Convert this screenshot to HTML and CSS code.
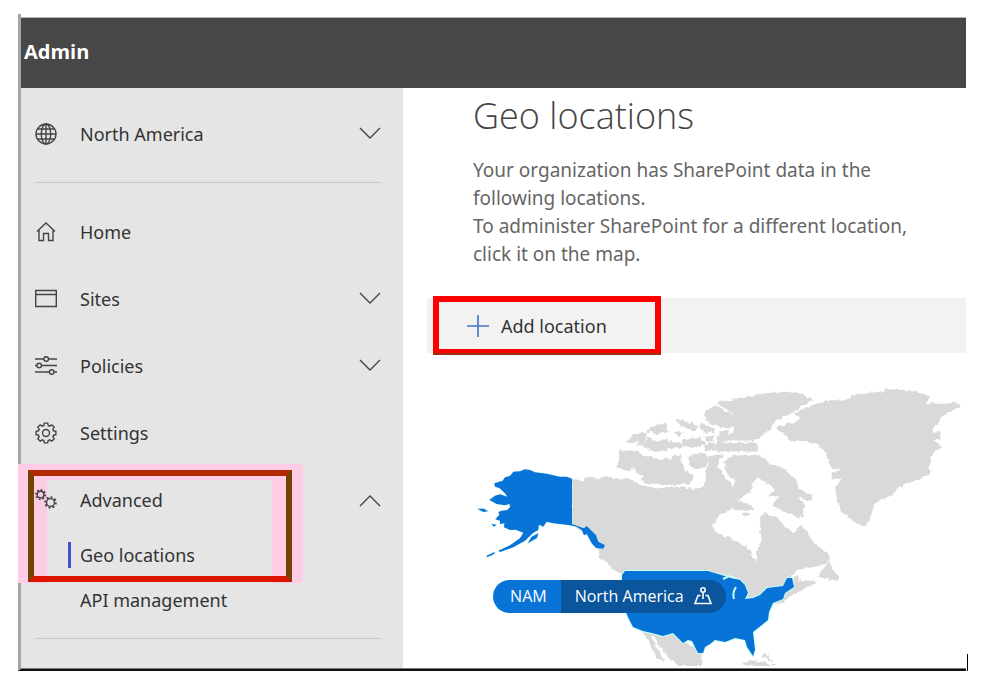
FILE: index.html
```html
<!DOCTYPE html>
<html lang="en">
<head>
<meta charset="utf-8">
<title>Geo locations - Admin</title>
<link rel="stylesheet" href="styles.css">
</head>
<body>
<div class="window">
  <header class="topbar">Admin</header>
  <div class="layout">
    <nav class="sidebar" aria-label="Admin navigation">
      <button class="row" type="button">
        <svg class="icon" viewBox="0 0 22 22"><circle cx="11" cy="11" r="10"/><ellipse cx="11" cy="11" rx="4.7" ry="10"/><path d="M11 1v20M1 11h20M2.6 6h16.800M2.600 16h16.800"/></svg>
        <span class="label">North America</span>
        <svg class="chevron" viewBox="0 0 22 22"><path d="M1 5l10 10L21 5"/></svg>
      </button>
      <hr class="rule">
      <a class="row" href="#home">
        <svg class="icon" viewBox="0 0 22 22"><path d="M2 10.500L11 2l9 8.500M4 9v10.500h4.500v-7h5v7H18V9"/></svg>
        <span class="label">Home</span>
      </a>
      <button class="row" type="button">
        <svg class="icon" viewBox="0 0 22 22"><path d="M.7 2.500h20.600v16H.7zM.7 6.500h20.600"/></svg>
        <span class="label">Sites</span>
        <svg class="chevron" viewBox="0 0 22 22"><path d="M1 5l10 10L21 5"/></svg>
      </button>
      <button class="row" type="button">
        <svg class="icon" viewBox="0 0 22 22"><path d="M0 4h9M13.500 4H22M0 10.500h2M6.500 10.500H22M0 17h14.500M19 17h3"/><circle cx="11.200" cy="4" r="2.300"/><circle cx="4.200" cy="10.500" r="2.300"/><circle cx="16.700" cy="17" r="2.300"/></svg>
        <span class="label">Policies</span>
        <svg class="chevron" viewBox="0 0 22 22"><path d="M1 5l10 10L21 5"/></svg>
      </button>
      <a class="row" href="#settings">
        <svg class="icon" viewBox="-11 -11 22 22"><circle r="3.500"/><path d="M-2.200-7.500L-1.700-9.900 1.700-9.900 2.200-7.500 3.750-6.860 5.800-8.200 8.200-5.800 6.860-3.750 7.500-2.200 9.900-1.700 9.900 1.700 7.500 2.200 6.860 3.750 8.200 5.800 5.800 8.200 3.750 6.860 2.200 7.500 1.700 9.900-1.700 9.900-2.200 7.500-3.750 6.860-5.800 8.200-8.200 5.800-6.860 3.750-7.500 2.200-9.900 1.700-9.900-1.700-7.500-2.200-6.860-3.750-8.200-5.800-5.800-8.200-3.750-6.860z"/></svg>
        <span class="label">Settings</span>
      </a>
      <div class="group">
        <button class="row" type="button" aria-expanded="true">
          <svg class="icon" viewBox="0 0 22 22"><circle cx="5.600" cy="5.600" r="3.300"/><circle class="teeth" cx="5.600" cy="5.600" r="4.600" pathLength="32"/><circle cx="15.500" cy="13.500" r="3.900"/><circle class="teeth" cx="15.500" cy="13.500" r="5.300" pathLength="32"/></svg>
          <span class="label">Advanced</span>
          <svg class="chevron" viewBox="0 0 22 22"><path d="M1 17L11 7l10 10"/></svg>
        </button>
        <a class="subrow current" href="#geo" aria-current="page">Geo locations</a>
      </div>
      <a class="subrow" href="#api">API management</a>
      <hr class="rule">
    </nav>
    <main class="content">
      <div class="intro">
        <h1>Geo locations</h1>
        <p>Your organization has SharePoint data in the<br>following locations.<br>To administer SharePoint for a different location,<br>click it on the map.</p>
      </div>
      <div class="commands">
        <button class="add" type="button">
          <svg class="plus" viewBox="0 0 22 22"><path d="M11 0v22M0 11h22"/></svg>
          <span>Add location</span>
        </button>
      </div>
      <div class="map">
        <svg class="land" viewBox="403 353 563 313" role="img" aria-label="Map of North America">
          <defs>
            <filter id="coast" x="-2%" y="-2%" width="104%" height="104%">
              <feTurbulence type="fractalNoise" baseFrequency="0.22" numOctaves="2" seed="4" result="n"/>
              <feDisplacementMap in="SourceGraphic" in2="n" scale="5" xChannelSelector="R" yChannelSelector="G"/>
            </filter>
          </defs>
          <g class="other" filter="url(#coast)">
            <path d="M572 478L580 481 590 477 600 478 606 476 614 479 628 479 640 484 652 488 665 488 680 487 695 489 705 485 706 472 708 456 723 454 717 466 728 480 734 488 740 484 744 497 735 500 733 507 720 515 712 525 715 532 730 538 748 547 752 557 757 562 757 550 763 542 760 532 761 515 765 513 777 517 788 530 795 532 800 525 808 533 813 543 828 553 829 562 813 567 797 570 790 578 798 575 800 582 812 580 817 583 797 592 780 604 745 606 640 606 622 575 610 567 598 552 588 536 572 524z"/>
            <path d="M830 561L833 571 838 576 838 581 828 579 818 578 822 570z"/>
            <g class="islands" transform="translate(600 380) scale(.33333)">
              <path d="M375 250L395 228 480 228 510 255 555 270 585 300 590 325 635 348 625 362 605 352 590 355 612 375 605 412 575 402 535 385 520 375 540 350 510 348 530 325 500 308 480 290 460 300 450 335 430 345 400 335 410 300 385 285z"/>
              <path d="M405 358L430 368 462 388 440 386 412 390 395 378zM428 400l18 2-10 8z"/>
              <path d="M62 214L110 215 130 228 170 240 210 238 240 225 245 255 255 275 275 285 270 308 225 312 150 308 125 300 130 288 108 275 105 255 85 268 52 262 60 240z"/>
              <path d="M265 235L290 222 315 222 320 240 312 262 285 265 270 255z"/>
              <path d="M80 186L105 162 142 158 130 190 115 195 122 172 100 190zM145 152l12-6-2 8zM150 147l45-18 4 14 4 12-34 4zM232 122l60 15-3 15-50-18zM225 155l18 6-8 4z"/>
              <path d="M130 200L145 175 172 190 195 178 215 190 240 190 245 202 210 204 170 214zM248 182l50-10 14 20-28 10-35-8zM300 134l24 2 16 18-32-2zM318 172l24-3-4 12-18 2zM316 196l25-5 2 18-24 0zM362 156l22-2 0 10-20 0z"/>
              <path d="M315 104L330 88 350 78 375 98 400 104 402 130 385 145 345 132 320 120z"/>
              <path d="M358 70L440 52 500 42 560 38 610 46 632 58 600 80 560 105 520 125 510 145 485 165 465 180 385 178 355 184 358 165 400 165 405 145 400 128 404 98 390 95z"/>
              <path d="M350 188L380 192 460 190 472 200 470 212 360 212 340 205z"/>
            </g>
            <g transform="translate(720 380) scale(.33333)">
              <path d="M275 76L330 60 370 62 410 42 480 35 500 28 560 30 610 42 634 52 615 68 650 72 712 68 722 77 685 98 660 115 650 135 638 145 640 158 662 155 660 180 640 180 668 202 645 215 632 235 628 258 632 280 600 296 540 320 515 345 465 365 455 400 440 435 425 438 385 415 362 390 350 350 345 320 362 300 335 298 335 278 360 270 330 260 322 225 295 192 240 182 210 184 200 165 180 155 172 140 235 124 242 110 218 105 230 95z"/>
            </g>
            <path d="M640 629L660 632 675 632 685 643 695 648 702 652 701 666 678 666 660 648 654 636 651 637 665 662 658 659 648 640zM600 553l5 9-6-4zM742 664l8-4 14 3 14 3h-34zM761 655l5-2 8 10-10-6z"/>
          </g>
          <g class="tenant">
            <g transform="translate(470 380) scale(.33333)">
              <path d="M306 296L290 290 270 290 230 281 195 277 180 270 165 268 150 274 130 275 120 288 105 292 98 302 73 310 75 320 88 324 105 340 112 350 90 343 75 347 58 360 80 372 105 376 118 372 121 380 112 390 95 392 85 396 88 404 76 418 90 422 90 432 103 430 102 442 120 450 137 449 160 458 150 475 120 496 85 512 90 516 130 502 165 482 190 458 205 450 207 434 220 440 230 425 250 430 300 436 320 440 335 450 342 466 350 462 360 480 365 490 378 504 400 506 405 495 385 485 378 465 350 438 342 445 306 432z"/>
              <path d="M22 386l20 0 12 8-14 2zM64 432l16 2-8 6zM50 527l25-12-4 8-20 9zM173 490l12-20 20-10-4 14z"/>
            </g>
            <path d="M622 575L625 571 708 571 728 577 740 580 745 585 748 593 745 599 753 598 760 595 767 588 783 586 787 578 792 578 794 587 785 593 783 599 773 603 769 612 768 620 753 632 755 650 753 656 747 647 745 640 735 638 725 642 715 640 710 644 705 647 703 653 698 653 692 641 688 640 683 643 673 633 663 636 652 633 643 631 633 627 627 615 622 597z"/>
            <path class="lake" d="M723 579l6-3 6 2M736 587q-4 6-2 12"/>
          </g>
        </svg>
        <button class="pin" type="button">
          <span class="code">NAM</span>
          <span class="place">North America
            <svg class="marker" viewBox="0 0 18 18"><circle cx="9" cy="3" r="2.200"/><path d="M9 5.200V12M6.500 8.500H4L1 16.500h16l-3-8h-2.500"/></svg>
          </span>
        </button>
      </div>
    </main>
  </div>
  <span class="caret"></span>
</div>
</body>
</html>
```
FILE: styles.css
```css
* {
  box-sizing: border-box;
}

body {
  margin: 0;
  background: #fff;
  color: #333;
  font: 18px/28px "Noto Sans", "Open Sans", sans-serif;
}

button {
  border: 0;
  background: none;
  color: inherit;
  font: inherit;
}

.window {
  position: relative;
  margin: 14px 18px 0;
  padding-top: 3px;
  border-left: 3px solid #a6a6a6;
  border-bottom: 2px solid #111;
}

.topbar {
  padding: 20px 3px 22px;
  border-top: 1px solid #b5b5b5;
  background: #474747;
  color: #fff;
  font-family: "Open Sans", sans-serif;
  font-size: 20px;
  font-weight: 700;
}

.layout {
  display: flex;
  border-bottom: 1px solid #777;
}

.sidebar {
  flex: none;
  width: 382px;
  padding: 12px 0 14px;
  background: #e5e5e5;
}

.row {
  display: flex;
  align-items: center;
  gap: 23px;
  width: 100%;
  height: 67px;
  padding: 0 22px 0 14px;
  color: #333;
  text-align: left;
  text-decoration: none;
}

.label {
  flex: 1;
}

svg {
  fill: none;
  stroke: #444;
}

.icon,
.chevron {
  flex: none;
  width: 22px;
  height: 22px;
  stroke-width: 1.4;
}

.teeth {
  stroke-width: 2;
  stroke-dasharray: 2 2;
}

.rule {
  margin: 15px 22px 15px 14px;
  border: 0;
  border-top: 1px solid #c8c8c8;
}

.group {
  position: relative;
  z-index: 0;
}

.group::before,
.group::after {
  content: "";
  position: absolute;
  pointer-events: none;
}

.group::before {
  z-index: -1;
  inset: -2px 100px -5px -3px;
  border: solid #ffcce5;
  border-width: 16px 31px 0 29px;
}

.group::after {
  inset: 4px 111px -4px 7px;
  border: 6px solid #754300;
  border-top-color: #b42800;
  border-bottom-color: #dc1400;
}

.subrow {
  display: block;
  padding: 8px 0 9px 59px;
  color: #333;
  text-decoration: none;
}

.current::before {
  content: "";
  float: left;
  width: 3px;
  height: 26px;
  margin: 1px 9px 0 -12px;
  background: #4650c8;
}

.content {
  flex: 1;
  display: flex;
  flex-direction: column;
  min-width: 0;
}

.intro {
  padding: 0 0 30px 70px;
}

h1 {
  margin: 0 0 12px;
  color: #444;
  font-family: "Open Sans", sans-serif;
  font-size: 36px;
  font-weight: 300;
  line-height: 56px;
}

.intro p {
  margin: 0;
  color: #666;
  font-size: 19px;
}

.commands {
  display: flex;
  height: 55px;
  margin-left: 24px;
  background: #f2f2f2;
}

.add {
  display: flex;
  align-items: center;
  gap: 12px;
  margin: -2px 0 0 6px;
  padding: 0 48px 0 28px;
  border: 6px solid #f00;
  border-bottom-width: 4px;
  box-shadow: 0 2px #983010;
}

.plus {
  width: 22px;
  height: 22px;
  stroke: #4472c4;
  stroke-width: 1.6;
}

.map {
  position: relative;
  flex: 1;
}

.land {
  display: block;
  width: 100%;
}

.other {
  fill: #d9d9d9;
  stroke: none;
}

.islands {
  stroke: #d9d9d9;
  stroke-width: 5;
}

.tenant {
  fill: #0874d8;
  stroke: #c8fff6;
  stroke-width: 2;
  paint-order: stroke;
}

.lake {
  fill: none;
}

.pin {
  position: absolute;
  left: 16%;
  top: 72%;
  display: flex;
  overflow: hidden;
  padding: 0;
  border-radius: 17px;
  color: #fff;
  font-family: "Open Sans", sans-serif;
  font-size: 16px;
  font-weight: 500;
  line-height: 33px;
}

.code {
  padding: 0 14px 0 17px;
  background: #0874d8;
}

.place {
  display: flex;
  align-items: center;
  gap: 10px;
  padding: 0 14px;
  background: #0a559c;
}

.marker {
  width: 18px;
  height: 18px;
  stroke: #fff;
  stroke-width: 1.6;
}

.caret {
  position: absolute;
  right: -2px;
  bottom: -4px;
  width: 1px;
  height: 19px;
  background: #000;
}
```
